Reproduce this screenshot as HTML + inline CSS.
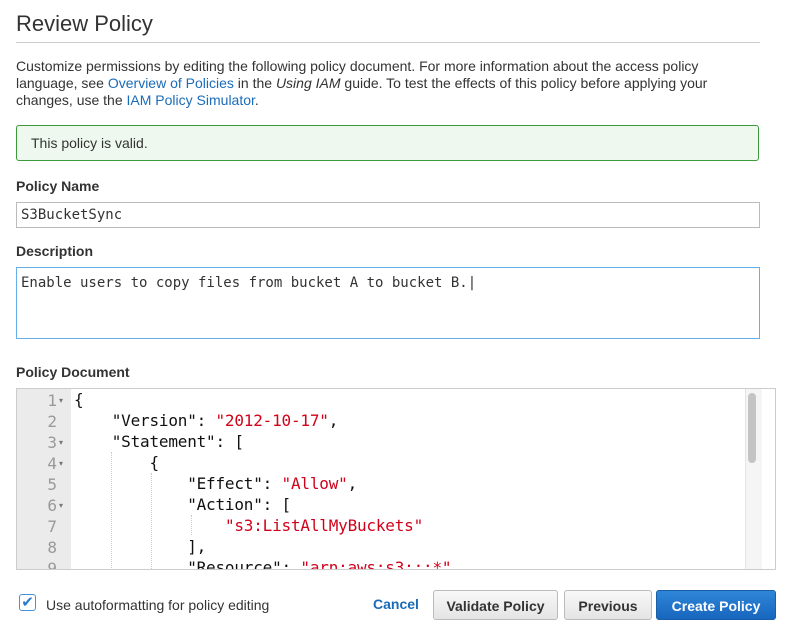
<!DOCTYPE html>
<html><head><style>
body{margin:0;width:787px;height:638px;overflow:hidden;background:#fff;font-family:"Liberation Sans",sans-serif;color:#333;position:relative}
.a{position:absolute}
h1{position:absolute;left:16px;top:11px;margin:0;font-size:22px;font-weight:normal;color:#333}
.rule{left:16px;top:42px;width:744px;height:1px;background:#ccc}
p{position:absolute;left:16px;top:58px;width:725px;margin:0;font-size:14px;line-height:17px}
a{color:#1a6bb8;text-decoration:none}
.valid{left:16px;top:125px;width:741px;height:34px;border:1px solid #3c9a3c;border-radius:3px;background:#eef8ee;font-size:14px;line-height:34px;text-indent:14px;box-sizing:content-box}
.lbl{left:16px;font-size:14px;font-weight:bold;color:#333}
.inp{left:16px;width:744px;border:1px solid #bbb;font-family:"DejaVu Sans Mono",monospace;font-size:14px;color:#333;box-sizing:border-box}
.ed{left:16px;top:388px;width:760px;height:182px;border:1px solid #ccc;overflow:hidden;box-sizing:border-box}
.gut{left:0;top:0;width:54px;height:182px;background:#ebebeb}
.ln{position:absolute;font-family:"DejaVu Sans Mono",monospace;font-size:16px;color:#999}
.code{left:57px;top:0;font-family:"DejaVu Sans Mono",monospace;font-size:16px;line-height:21px;white-space:pre;color:#111;letter-spacing:-0.2px}
.s{color:#d0021b}
.btn{top:590px;height:30px;border:1px solid #bbb;border-radius:3px;background:linear-gradient(#f8f8f8,#e4e4e4);font-size:14px;font-weight:bold;line-height:30px;text-align:center;box-sizing:border-box;color:#333}
</style></head><body>
<h1>Review Policy</h1>
<div class="a rule"></div>
<p>Customize permissions by editing the following policy document. For more information about the access policy language, see <a>Overview of Policies</a> in the <i>Using IAM</i> guide. To test the effects of this policy before applying your changes, use the <a>IAM Policy Simulator</a>.</p>
<div class="a valid">This policy is valid.</div>
<div class="a lbl" style="top:178px">Policy Name</div>
<div class="a inp" style="top:202px;height:26px;line-height:24px;padding-left:4px">S3BucketSync</div>
<div class="a lbl" style="top:243px">Description</div>
<div class="a inp" style="top:267px;height:72px;border-color:#66afe9;padding:5px 4px;line-height:20px">Enable users to copy files from bucket A to bucket B.|</div>
<div class="a lbl" style="top:364px">Policy Document</div>
<div class="a ed">
<div class="a gut"></div>
<div class="ln" style="top:1px;left:0;line-height:21px"><div style="width:40px;text-align:right">1<br>2<br>3<br>4<br>5<br>6<br>7<br>8<br>9</div></div>
<div class="a" style="left:42px;top:1px;font-size:8px;line-height:21px;color:#777">▾<br><br>▾<br>▾<br><br>▾</div>
<div class="a code">{
    "Version": <span class="s">"2012-10-17"</span>,
    "Statement": [
        {
            "Effect": <span class="s">"Allow"</span>,
            "Action": [
                <span class="s">"s3:ListAllMyBuckets"</span>
            ],
            "Resource": <span class="s">"arn:aws:s3:::*"</span></div>
<div class="a" style="left:94px;top:63px;height:120px;border-left:1px dotted #ccc"></div>
<div class="a" style="left:134px;top:84px;height:100px;border-left:1px dotted #ccc"></div>
<div class="a" style="left:174px;top:126px;height:20px;border-left:1px dotted #ccc"></div>
<div class="a" style="left:728px;top:0;width:16px;height:182px;background:#f5f5f5;border-left:1px solid #e4e4e4"></div>
<div class="a" style="left:731px;top:4px;width:8px;height:70px;background:#c4c4c4;border-radius:4px"></div>
</div>
<div class="a" style="left:19px;top:594px;width:17px;height:17px;border:1px solid #4a90d9;border-radius:3px;box-sizing:border-box;color:#2a7ad0;font-size:15px;line-height:15px;text-align:center">✔</div>
<div class="a" style="left:46px;top:597px;font-size:14px">Use autoformatting for policy editing</div>
<div class="a" style="left:373px;top:596px;font-size:14px;font-weight:bold;color:#1a6bb8">Cancel</div>
<div class="a btn" style="left:433px;width:125px">Validate Policy</div>
<div class="a btn" style="left:564px;width:88px">Previous</div>
<div class="a btn" style="left:656px;width:120px;background:linear-gradient(#2f86d8,#1666bd);border-color:#1a5ea8;color:#fff">Create Policy</div>
</body></html>
